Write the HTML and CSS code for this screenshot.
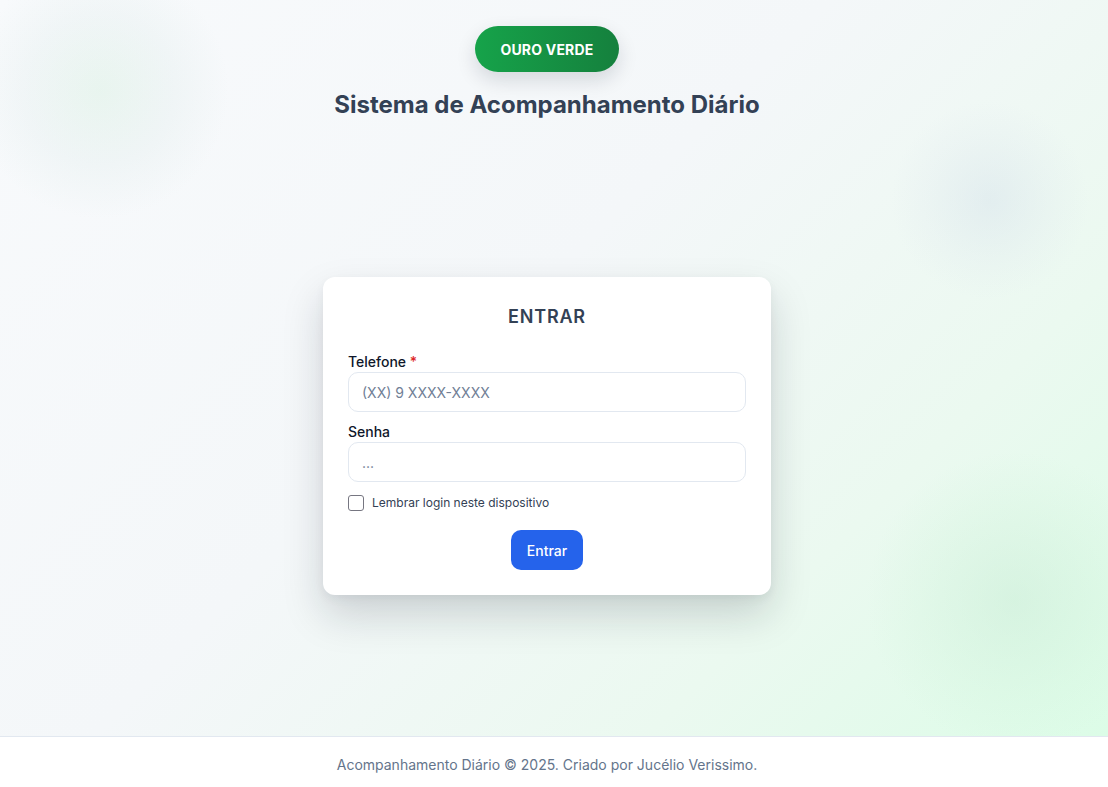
FILE: index.html
```html
<!DOCTYPE html>
<html lang="pt-BR">
<head>
<meta charset="utf-8">
<title>Ouro Verde - Login</title>
<link rel="stylesheet" href="styles.css">
</head>
<body>
<div class="page">
  <main class="main">
    <div class="blob blob-a"></div>
    <div class="blob blob-b"></div>
    <div class="blob blob-c"></div>
    <header class="header">
      <div class="brand">OURO VERDE</div>
      <h1 class="title">Sistema de Acompanhamento Diário</h1>
    </header>
    <div class="center">
      <form class="card">
        <h2 class="card-title">ENTRAR</h2>
        <div class="field">
          <label class="label" for="tel">Telefone <span class="req">*</span></label>
          <input class="input" id="tel" type="text" placeholder="(XX) 9 XXXX-XXXX">
        </div>
        <div class="field">
          <label class="label" for="pwd">Senha</label>
          <input class="input" id="pwd" type="password" placeholder="...">
        </div>
        <label class="remember">
          <span class="check"></span>
          <span>Lembrar login neste dispositivo</span>
        </label>
        <div class="actions">
          <button class="btn" type="button">Entrar</button>
        </div>
      </form>
    </div>
  </main>
  <footer class="footer">Acompanhamento Diário © 2025. Criado por Jucélio Verissimo.</footer>
</div>
</body>
</html>
```
FILE: styles.css
```css
* { box-sizing: border-box; }
html, body { margin: 0; padding: 0; height: 100%; }
body {
  font-family: Inter, "Noto Sans", sans-serif;
  color: #0f172a;
}
.page {
  display: flex;
  flex-direction: column;
  min-height: 100vh;
}
.main {
  position: relative;
  overflow: hidden;
  flex: 1;
  display: flex;
  flex-direction: column;
  background: linear-gradient(135deg, #f8fafc 0%, #f4f7f9 45%, #ebf9f0 75%, #dcfce7 100%);
}
.blob {
  position: absolute;
  border-radius: 50%;
  pointer-events: none;
}
.blob-a {
  left: -30px; top: -40px; width: 260px; height: 260px;
  background: radial-gradient(circle, rgba(205, 236, 215, 0.35) 0%, rgba(210, 228, 225, 0.2) 40%, rgba(220, 235, 240, 0) 70%);
}
.blob-b {
  left: 890px; top: 100px; width: 200px; height: 200px;
  background: radial-gradient(circle, rgba(205, 218, 232, 0.35) 0%, rgba(215, 225, 235, 0.15) 45%, rgba(230, 235, 240, 0) 70%);
}
.blob-c {
  left: 865px; top: 450px; width: 300px; height: 300px;
  background: radial-gradient(circle, rgba(195, 232, 208, 0.4) 0%, rgba(205, 240, 215, 0.2) 45%, rgba(220, 250, 230, 0) 70%);
}
.header {
  position: relative;
  display: flex;
  flex-direction: column;
  align-items: center;
  padding: 26px 14px 0 0;
}
.brand {
  height: 46px;
  width: 144px;
  display: flex;
  align-items: center;
  justify-content: center;
  border-radius: 23px;
  background: linear-gradient(90deg, #16a34a 0%, #15803d 100%);
  color: #ffffff;
  font-weight: 700;
  font-size: 14px;
  letter-spacing: 0.2px;
  box-shadow: 0 8px 20px rgba(15, 23, 42, 0.14);
}
.title {
  margin: 18px 0 0;
  font-size: 24px;
  line-height: 30px;
  font-weight: 700;
  color: #334155;
}
.center {
  position: relative;
  flex: 1;
  display: flex;
  align-items: center;
  justify-content: center;
  padding: 16px 14px 0 0;
}
.card {
  width: 448px;
  background: #ffffff;
  border-radius: 12px;
  padding: 29px 25px 25px;
  box-shadow: 0 20px 40px rgba(15, 23, 42, 0.17), 0 4px 10px rgba(15, 23, 42, 0.05);
}
.card-title {
  margin: 0 0 24px;
  text-align: center;
  font-size: 18px;
  line-height: 22px;
  font-weight: 600;
  letter-spacing: 0.8px;
  color: #334155;
}
.field {
  display: flex;
  flex-direction: column;
  margin-bottom: 10px;
}
.label {
  font-size: 14px;
  line-height: 20px;
  font-weight: 500;
  color: #0f172a;
}
.req { color: #dc2626; }
.input {
  height: 40px;
  width: 100%;
  border: 1px solid #e2e8f0;
  border-radius: 10px;
  padding: 0 13px;
  font-family: inherit;
  font-size: 14px;
  color: #0f172a;
  background: #ffffff;
  outline: none;
}
.input::placeholder { color: #718096; }
.remember {
  display: flex;
  align-items: center;
  gap: 8px;
  margin-top: 13px;
  font-size: 12px;
  line-height: 16px;
  color: #334155;
}
.check {
  width: 16px;
  height: 16px;
  border: 1px solid #767681;
  border-radius: 3px;
  background: #fff;
}
.actions {
  display: flex;
  justify-content: center;
  margin-top: 19px;
}
.btn {
  height: 40px;
  padding: 0 16px;
  border: none;
  border-radius: 10px;
  background: #2563eb;
  color: #ffffff;
  font-family: inherit;
  font-size: 14px;
  font-weight: 500;
}
.footer {
  height: 51px;
  border-top: 1px solid #e2e8f0;
  background: #ffffff;
  display: flex;
  align-items: center;
  justify-content: center;
  padding: 4px 14px 0 0;
  font-size: 14px;
  color: #64748b;
}
```
